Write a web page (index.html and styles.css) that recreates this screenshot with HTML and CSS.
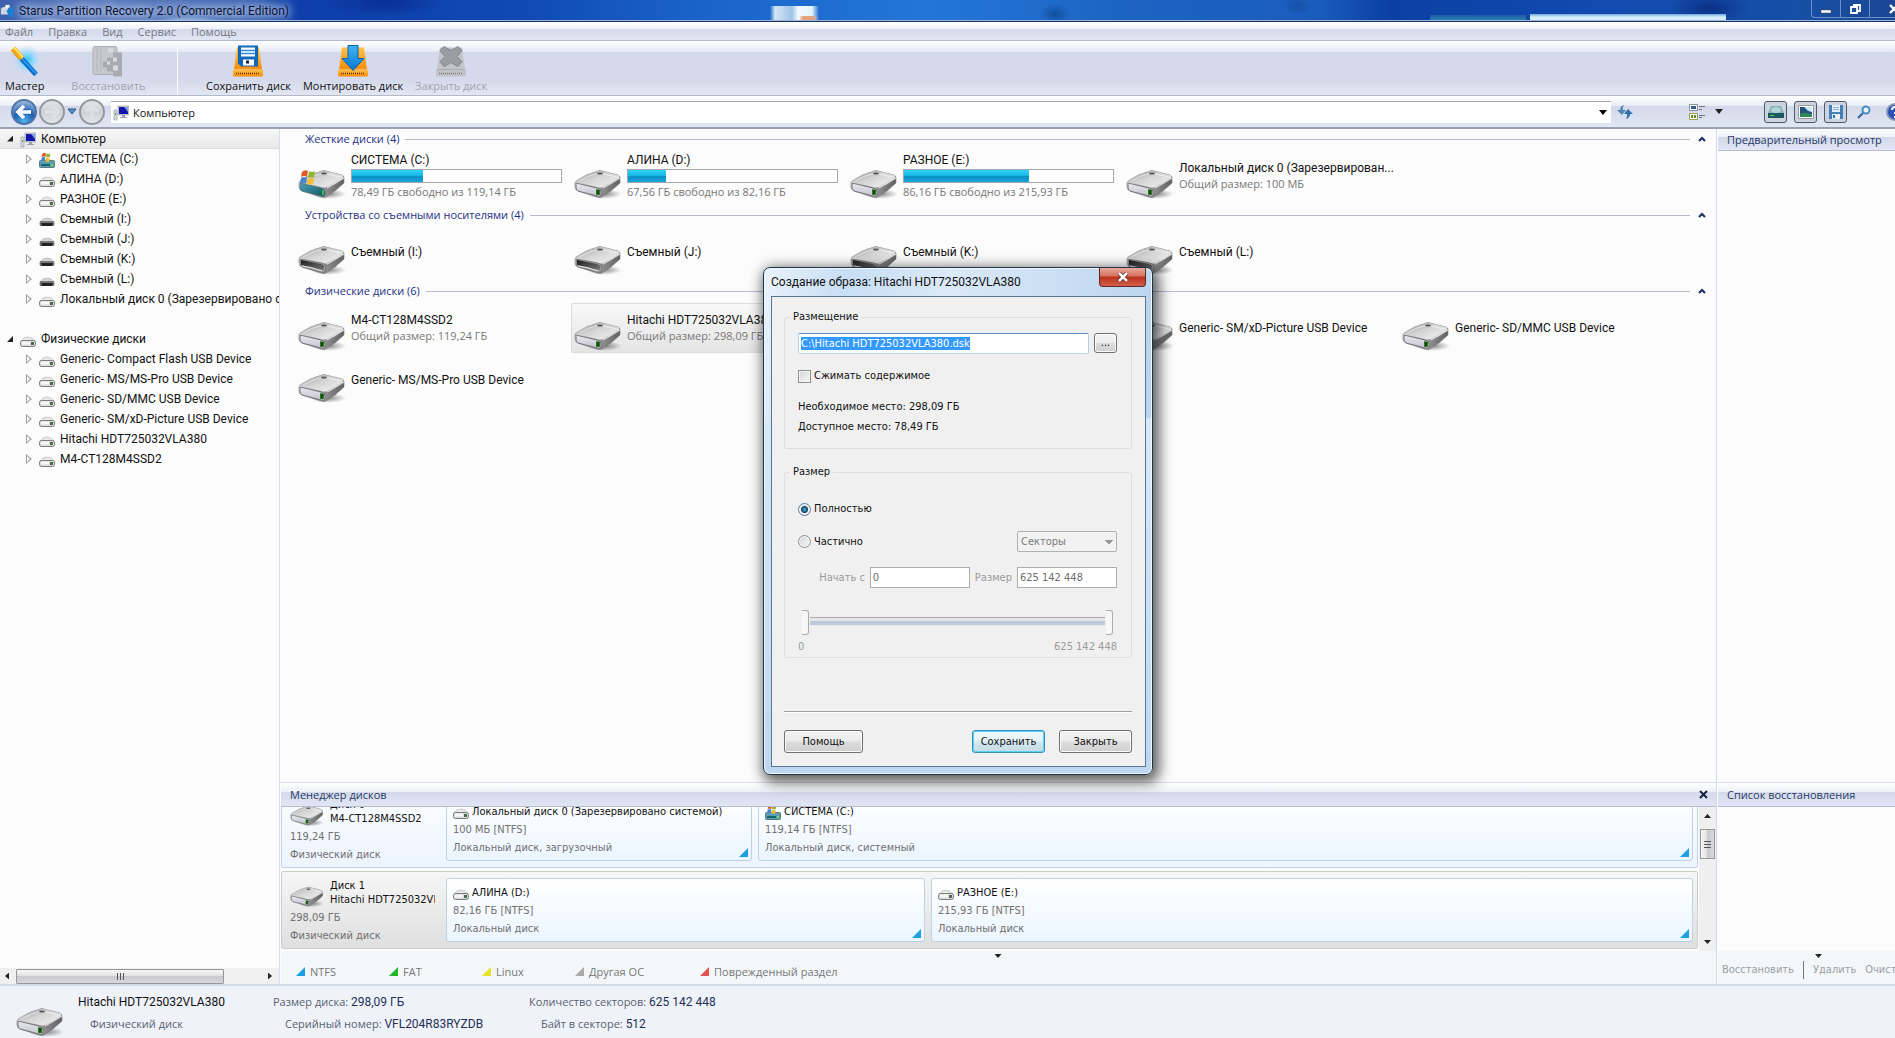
FILE: index.html
```html
<!DOCTYPE html>
<html lang="ru">
<head>
<meta charset="utf-8">
<title>Starus Partition Recovery 2.0 (Commercial Edition)</title>
<link rel="stylesheet" href="styles.css">
</head>
<body>
<svg class="defs" aria-hidden="true">
  <defs>
    <linearGradient id="gTop" x1="0" y1="0" x2="1" y2="1"><stop offset="0" stop-color="#8f8f8f"/><stop offset=".45" stop-color="#d4d4d4"/><stop offset="1" stop-color="#f4f4f4"/></linearGradient>
    <linearGradient id="gFront" x1="0" y1="0" x2="0" y2="1"><stop offset="0" stop-color="#e9e9f1"/><stop offset="1" stop-color="#c3c3cf"/></linearGradient>
    <linearGradient id="gSide" x1="0" y1="0" x2="1" y2="0"><stop offset="0" stop-color="#ececec"/><stop offset=".4" stop-color="#a5a5a5"/><stop offset="1" stop-color="#606060"/></linearGradient>
    <linearGradient id="gHole" x1="0" y1="0" x2="1" y2="1"><stop offset="0" stop-color="#1c1c1c"/><stop offset="1" stop-color="#777"/></linearGradient>
    <linearGradient id="gTeal" x1="0" y1="0" x2="1" y2="1"><stop offset="0" stop-color="#4f9fb8"/><stop offset="1" stop-color="#0c5961"/></linearGradient>
    <linearGradient id="gOrange" x1="0" y1="0" x2="0" y2="1"><stop offset="0" stop-color="#ffc14a"/><stop offset="1" stop-color="#fb8d0c"/></linearGradient>
    <linearGradient id="gBlue" x1="0" y1="0" x2="0" y2="1"><stop offset="0" stop-color="#3cb4f7"/><stop offset="1" stop-color="#0b76cf"/></linearGradient>
    <radialGradient id="gBack" cx=".5" cy=".9" r=".9"><stop offset="0" stop-color="#4fb4ee"/><stop offset=".5" stop-color="#205faf"/><stop offset="1" stop-color="#a9c4e4"/></radialGradient>
    <linearGradient id="gGrey" x1="0" y1="0" x2="0" y2="1"><stop offset="0" stop-color="#e6e7eb"/><stop offset=".5" stop-color="#cfd1d8"/><stop offset="1" stop-color="#e4e6ec"/></linearGradient>
    <radialGradient id="gGlow"><stop offset="0" stop-color="#35c2ff"/><stop offset=".5" stop-color="#8fdcff" stop-opacity=".8"/><stop offset="1" stop-color="#d5dcf0" stop-opacity="0"/></radialGradient>
    <radialGradient id="gShade"><stop offset="0" stop-color="#000" stop-opacity=".45"/><stop offset="1" stop-color="#000" stop-opacity="0"/></radialGradient>

    <symbol id="body" viewBox="0 0 48 31">
      <ellipse cx="30" cy="25" rx="18" ry="5" fill="url(#gShade)"/>
      <path d="M2 12 Q12 5 24 2 Q26 1 28 2 L44 6 Q46 7 46 9 L46 14 Q38 22 28 28 Q26 29 23 28 L4 22 Q1 21 1 18 L1 14Z" fill="url(#gSide)" stroke="#777" stroke-width=".6"/>
      <path d="M2 12 Q12 5 24 2 Q26 1 28 2 L44 6 Q46 7 45 9 Q37 14 29 18 Q26 19 23 18 L3 13Z" fill="url(#gTop)"/>
      <path d="M5 12 Q15 6 26 4 L42 8" fill="none" stroke="#fff" stroke-width=".8" opacity=".7"/>
      <ellipse cx="26" cy="4.500" rx="3" ry="1" fill="#555"/>
      <path d="M29 19 Q38 14 46 9" stroke="#fff" stroke-width="1.300" fill="none" opacity=".75"/>
    </symbol>
    <symbol id="drive" viewBox="0 0 48 31">
      <use href="#body"/>
      <path d="M2 14 L23 19 Q27 20 27 23 L27 26 Q26 28 23 27 L4 22 Q2 21 2 18Z" fill="url(#gFront)" stroke="#6c6c6c" stroke-width=".9"/>
      <path d="M22 20 L26 21 L26 26 L22 26Z" fill="#2d7d22"/><path d="M24 21v4" stroke="#0b220a" stroke-width="1.200"/>
    </symbol>
    <symbol id="removable" viewBox="0 0 48 31">
      <use href="#body"/>
      <path d="M2 14 L24 18 Q28 19 28 22 L27 27 Q26 28 23 27 L4 22 Q2 21 2 18Z" fill="#9a9a9a" stroke="#6c6c6c" stroke-width=".7"/>
      <path d="M3 15 L23 19 Q27 20 26 23 L25 25 Q17 24 12 22 L3 20Z" fill="url(#gHole)"/>
      <path d="M4 21 Q14 22 24 26" stroke="#e4e4e4" stroke-width="1.200" fill="none"/>
    </symbol>
    <symbol id="flag" viewBox="0 0 16 16">
      <path d="M2 3 Q5 0 8 2 L7 8 Q4 6 1 8Z" fill="#e0592a"/><path d="M9 2 Q12 4 15 2 L14 8 Q11 9 8 8Z" fill="#8cb72e"/>
      <path d="M1 9 Q4 7 7 9 L6 15 Q3 13 0 15Z" fill="#4a86d0"/><path d="M8 9 Q11 10 14 9 L13 15 Q10 16 7 15Z" fill="#f6bd2c"/>
    </symbol>
    <symbol id="system" viewBox="0 0 48 31">
      <use href="#body"/>
      <path d="M2 14 L23 19 Q27 20 27 23 L27 26 Q26 28 23 27 L4 22 Q2 21 2 18Z" fill="url(#gTeal)" stroke="#4e6c70" stroke-width=".8"/>
      <path d="M25 21v5" stroke="#53d33a" stroke-width="1.500"/>
      <use href="#flag" x="2" y="0" width="16" height="16"/>
    </symbol>
    <symbol id="sDrive" viewBox="0 0 16 16">
      <path d="M4 6 Q8 4 12 6 L15 9 H1Z" fill="#e8e8e8" stroke="#b4b4b4" stroke-width=".6"/>
      <rect x=".5" y="8.500" width="15" height="6" rx="2" fill="#dcdcdc" stroke="#7d7d7d"/><rect x="2" y="9.500" width="8" height="3" fill="#f6f6f6"/><rect x="11" y="10" width="3" height="3" fill="#4b6b4b"/>
    </symbol>
    <symbol id="sRemovable" viewBox="0 0 16 16">
      <path d="M4 7 Q8 5 12 7 L15 10 H1Z" fill="#d6d6d6" stroke="#aaa" stroke-width=".6"/>
      <path d="M1 9 H15 Q16 12 15 14 H1 Q0 12 1 9Z" fill="#777"/><path d="M2 11 H14 L13 14 H3Z" fill="#222"/>
    </symbol>
    <symbol id="sSystem" viewBox="0 0 16 16">
      <rect x=".5" y="8.500" width="15" height="7" rx="1" fill="#5c9db0" stroke="#5a7d80"/><rect x="2" y="12" width="9" height="2" fill="#17656e"/><rect x="12" y="12" width="2" height="2" fill="#6be04a"/>
      <use href="#flag" x="2" y="0" width="10" height="10"/>
    </symbol>
    <symbol id="pc" viewBox="0 0 16 16">
      <rect x="5" y="1" width="11" height="9" fill="#c9cfd8" stroke="#8d96a3" stroke-width=".6"/><rect x="6" y="2" width="9" height="7" fill="#1414a8"/><path d="M11 2h4v5z" fill="#7aa0ee"/>
      <path d="M9 10h3v2h2v1H7v-1h2z" fill="#9aa2ad"/><rect x="1" y="5" width="3" height="10" fill="#d5d8dd" stroke="#8d96a3" stroke-width=".6"/><rect x="2" y="8" width="1" height="2" fill="#4aa92f"/>
    </symbol>
    <symbol id="hdd" viewBox="0 0 32 32">
      <path d="M5 2 H27 L30 24 H2Z"/><rect x="1" y="24" width="30" height="7" rx="1"/>
    </symbol>
  </defs>
</svg>

<div class="window">
  <header class="titlebar">
    <svg class="app-icon" viewBox="0 0 16 16" aria-hidden="true"><path d="M1 5q4-3 8 0v7H1z" fill="#cfd7df"/><path d="M6 1h5v4H6z" fill="#e9eef3"/><path d="M7 7h3V4h5v3l-1 8h-4l-1-4z" fill="#147fd6"/></svg>
    <h1>Starus Partition Recovery 2.0 (Commercial Edition)</h1>
    <div class="win-buttons">
      <button aria-label="Свернуть"><svg width="12" height="10" viewBox="0 0 12 10"><rect x="1" y="6" width="10" height="3" fill="#fff" stroke="#445" stroke-width=".5"/></svg></button>
      <button aria-label="Восстановить окно"><svg width="12" height="10" viewBox="0 0 12 10"><path d="M4 1h7v6H9M2 3h6v6H2z" fill="none" stroke="#fff" stroke-width="1.800"/></svg></button>
      <button aria-label="Закрыть окно" class="wide"><svg width="12" height="10" viewBox="0 0 12 10"><path d="M2 1l8 8M10 1l-8 8" stroke="#fff" stroke-width="2.400"/></svg></button>
    </div>
  </header>

  <nav class="menubar"><a href="#">Файл</a><a href="#">Правка</a><a href="#">Вид</a><a href="#">Сервис</a><a href="#">Помощь</a></nav>

  <div class="toolbar">
    <div class="tool-group first">
      <button>
        <svg viewBox="0 0 32 32"><circle cx="18" cy="14" r="15" fill="url(#gGlow)"/><path d="M6 6l21 23" stroke="#0a6fd0" stroke-width="5"/><path d="M8 8l19 20" stroke="#2fa5f5" stroke-width="1.500"/><path d="M4 3l9 10" stroke="#f6a80e" stroke-width="6"/><path d="M5 2l9 10" stroke="#ffe36c" stroke-width="2"/></svg>
        Мастер</button>
      <button disabled>
        <svg viewBox="0 0 32 32"><rect x="1" y="1" width="24" height="28" rx="2" fill="#c6c8cd" stroke="#adafb5"/><path d="M5 3v23M9 3v23" stroke="#b3b5ba"/><path d="M15 12h6V7h9v24h-9v-5h-6v-4h-4v-6h4z" fill="#a9abb1"/><path d="M21 12h4v4h-4zM15 16h3v3h-3zM21 20h5v5h-5zM16 3h5v4h-5z" fill="#d9dbe0"/></svg>
        Восстановить</button>
    </div>
    <div class="tool-group">
      <button>
        <svg viewBox="0 0 32 32"><use href="#hdd" fill="url(#gOrange)"/><path d="M4 28h24" stroke="#5b3206" stroke-width="1.500" stroke-dasharray="1 1"/><path d="M6 0h20v21H9l-3-3z" fill="#1267ba"/><path d="M9 2h14v9H9z" fill="#fff"/><path d="M9 5h14M9 8h14" stroke="#2e8ae0" stroke-width="1.500"/><path d="M11 14h11v6H11z" fill="#fff"/><path d="M14 15h3v3h-3z" fill="#123"/></svg>
        Сохранить диск</button>
      <button>
        <svg viewBox="0 0 32 32"><use href="#hdd" fill="url(#gOrange)"/><path d="M4 28h24" stroke="#5b3206" stroke-width="1.500" stroke-dasharray="1 1"/><path d="M11 0h10v13h6L16 25 5 13h6z" fill="url(#gBlue)" stroke="#0861ac"/></svg>
        Монтировать диск</button>
      <button disabled>
        <svg viewBox="0 0 32 32"><use href="#hdd" fill="#c3c4c9"/><path d="M4 28h24" stroke="#777" stroke-width="1.500" stroke-dasharray="1 1"/><path d="M2 24h28" stroke="#adaeb3"/><path d="M9 1l7 4 7-4 4 4-5 6 5 5-4 5-7-4-7 4-4-5 5-5-5-6z" fill="#9c9da3" stroke="#85868c"/></svg>
        Закрыть диск</button>
    </div>
  </div>

  <div class="navbar">
    <button aria-label="Назад" class="round"><svg viewBox="0 0 28 28"><circle cx="14" cy="14" r="12" fill="url(#gBack)" stroke="#4f74a5" stroke-width="2"/><path d="M21 14H9M14 8l-6 6 6 6" fill="none" stroke="#fff" stroke-width="3.500"/></svg></button>
    <button aria-label="Вперед" class="round"><svg viewBox="0 0 28 28"><circle cx="14" cy="14" r="12" fill="url(#gGrey)" stroke="#96989f" stroke-width="2"/><path d="M7 14h12M14 8l6 6-6 6" fill="none" stroke="#dfe0e5" stroke-width="3"/></svg></button>
    <button aria-label="История" class="history"><svg viewBox="0 0 10 8"><path d="M1 1h8L5 6z" fill="#5798d0" stroke="#23568f"/></svg></button>
    <button aria-label="Вверх" class="round"><svg viewBox="0 0 28 28"><circle cx="14" cy="14" r="12" fill="url(#gGrey)" stroke="#96989f" stroke-width="2"/><path d="M14 21V9M8 14l6-6 6 6" fill="none" stroke="#dfe0e5" stroke-width="3"/></svg></button>
    <label class="address">
      <svg width="16" height="16"><use href="#pc"/></svg>
      <input type="text" value="Компьютер" aria-label="Адрес">
      <svg width="8" height="5" viewBox="0 0 8 5"><path d="M0 0h8L4 5z"/></svg>
    </label>
    <button aria-label="Обновить" class="plain"><svg width="16" height="14" viewBox="0 0 16 14"><path d="M7 0Q3 1 3 5H0l5 5 4-5H6Q5 3 7 0" fill="#4d86b5"/><path d="M9 14q4-1 4-5h3l-5-5-4 5h3q1 2-1 5" fill="#2f6fae"/></svg></button>
    <div class="nav-right">
      <button aria-label="Вид" class="plain view"><svg width="17" height="16" viewBox="0 0 17 16"><rect x=".5" y=".5" width="8" height="6" fill="#fff" stroke="#8795a3"/><rect x="2" y="2" width="5" height="3" fill="#345f88"/><rect x=".5" y="9.500" width="8" height="6" fill="#fff" stroke="#9aa34d"/><path d="M2 11h2v3H2zM5 11h2v3H5z" fill="#66892c"/><path d="M10 2.500h6M10 5.500h3M10 11.500h6M10 13.500h3" stroke="#68717c"/></svg><svg width="8" height="5" viewBox="0 0 8 5"><path d="M0 0h8L4 5z" fill="#222"/></svg></button>
      <button aria-label="Диски" class="toggle"><svg width="16" height="16"><path d="M3 2h10l3 7H0z" fill="#83b4b8"/><ellipse cx="8" cy="6" rx="5" ry="3" fill="#b2d4d7"/><path d="M0 9h16v5H0z" fill="#1d5961"/><path d="M2 11h4v1H2z" fill="#59d14b"/></svg></button>
      <button aria-label="Просмотр" class="toggle"><svg width="16" height="16"><path d="M.5 1.500h15v13H.5z" fill="#fff" stroke="#999"/><path d="M2 3h12v10H2z" fill="#4aa3d6"/><path d="M7 3h7v5q-5-1-7-5z" fill="#cfeaf8"/><path d="M2 3h4q3 5 8 5v2H2z" fill="#23507c"/><path d="M2 10q6-3 12 1v2H2z" fill="#2d8a58"/></svg></button>
      <button aria-label="Список" class="toggle"><svg width="16" height="16"><path d="M1 1h14v14H1z" fill="#4380b8"/><path d="M4 1h8v7H4z" fill="#e4eff8"/><path d="M5 3.500h6M5 5.500h6" stroke="#8fb4d4"/><path d="M4 10h8v5H4z" fill="#e7eef5"/><path d="M5 11h2v3H5z" fill="#326fa8"/></svg></button>
      <button aria-label="Поиск" class="plain"><svg width="14" height="14" viewBox="0 0 14 14"><circle cx="9" cy="5" r="3.500" fill="#e8f3fc" stroke="#4b8bc0" stroke-width="2"/><path d="M6 8l-5 5" stroke="#31689b" stroke-width="2"/></svg></button>
      <button aria-label="Справка" class="plain help"><svg width="18" height="18" viewBox="0 0 18 18"><circle cx="9" cy="9" r="8" fill="#2b51b0" stroke="#8497bb" stroke-width="2"/><path d="M6 7q0-3 3-3t3 3q0 2-3 3v1M9 13v2" fill="none" stroke="#fff" stroke-width="2"/></svg></button>
    </div>
  </div>

  <div class="workspace">
    <aside class="sidebar">
      <ul class="tree">
        <li>
          <div class="node root selected"><i class="open"></i><svg><use href="#pc"/></svg>Компьютер</div>
          <ul>
            <li class="node"><i class="shut"></i><svg><use href="#sSystem"/></svg>СИСТЕМА (C:)</li>
            <li class="node"><i class="shut"></i><svg><use href="#sDrive"/></svg>АЛИНА (D:)</li>
            <li class="node"><i class="shut"></i><svg><use href="#sDrive"/></svg>РАЗНОЕ (E:)</li>
            <li class="node"><i class="shut"></i><svg><use href="#sRemovable"/></svg>Съемный (I:)</li>
            <li class="node"><i class="shut"></i><svg><use href="#sRemovable"/></svg>Съемный (J:)</li>
            <li class="node"><i class="shut"></i><svg><use href="#sRemovable"/></svg>Съемный (K:)</li>
            <li class="node"><i class="shut"></i><svg><use href="#sRemovable"/></svg>Съемный (L:)</li>
            <li class="node"><i class="shut"></i><svg><use href="#sDrive"/></svg>Локальный диск 0 (Зарезервировано системой)</li>
          </ul>
        </li>
        <li>
          <div class="node root"><i class="open"></i><svg><use href="#sDrive"/></svg>Физические диски</div>
          <ul>
            <li class="node"><i class="shut"></i><svg><use href="#sDrive"/></svg>Generic- Compact Flash USB Device</li>
            <li class="node"><i class="shut"></i><svg><use href="#sDrive"/></svg>Generic- MS/MS-Pro USB Device</li>
            <li class="node"><i class="shut"></i><svg><use href="#sDrive"/></svg>Generic- SD/MMC USB Device</li>
            <li class="node"><i class="shut"></i><svg><use href="#sDrive"/></svg>Generic- SM/xD-Picture USB Device</li>
            <li class="node"><i class="shut"></i><svg><use href="#sDrive"/></svg>Hitachi HDT725032VLA380</li>
            <li class="node"><i class="shut"></i><svg><use href="#sDrive"/></svg>M4-CT128M4SSD2</li>
          </ul>
        </li>
      </ul>
      <div class="hscroll"><i class="left"></i><div class="hthumb"><b></b><b></b><b></b></div><i class="right-end"></i></div>
    </aside>

    <main class="center">
      <div class="browser">
        <section>
          <h2><span>Жесткие диски (4)</span><svg viewBox="0 0 8 6"><path d="M1 5l3-3 3 3"/></svg></h2>
          <div class="items">
            <div class="item"><svg><use href="#system"/></svg><div><b>СИСТЕМА (C:)</b><div class="bar"><span style="width:34%"></span></div><small>78,49 ГБ свободно из 119,14 ГБ</small></div></div>
            <div class="item"><svg><use href="#drive"/></svg><div><b>АЛИНА (D:)</b><div class="bar"><span style="width:18%"></span></div><small>67,56 ГБ свободно из 82,16 ГБ</small></div></div>
            <div class="item"><svg><use href="#drive"/></svg><div><b>РАЗНОЕ (E:)</b><div class="bar"><span style="width:60%"></span></div><small>86,16 ГБ свободно из 215,93 ГБ</small></div></div>
            <div class="item"><svg><use href="#drive"/></svg><div><b>Локальный диск 0 (Зарезервирован...</b><small>Общий размер: 100 МБ</small></div></div>
          </div>
        </section>
        <section>
          <h2><span>Устройства со съемными носителями (4)</span><svg viewBox="0 0 8 6"><path d="M1 5l3-3 3 3"/></svg></h2>
          <div class="items">
            <div class="item"><svg><use href="#removable"/></svg><div><b>Съемный (I:)</b></div></div>
            <div class="item"><svg><use href="#removable"/></svg><div><b>Съемный (J:)</b></div></div>
            <div class="item"><svg><use href="#removable"/></svg><div><b>Съемный (K:)</b></div></div>
            <div class="item"><svg><use href="#removable"/></svg><div><b>Съемный (L:)</b></div></div>
          </div>
        </section>
        <section>
          <h2><span>Физические диски (6)</span><svg viewBox="0 0 8 6"><path d="M1 5l3-3 3 3"/></svg></h2>
          <div class="items">
            <div class="item"><svg><use href="#drive"/></svg><div><b>M4-CT128M4SSD2</b><small>Общий размер: 119,24 ГБ</small></div></div>
            <div class="item active"><svg><use href="#drive"/></svg><div><b>Hitachi HDT725032VLA380</b><small>Общий размер: 298,09 ГБ</small></div></div>
            <div class="item"><svg><use href="#drive"/></svg><div><b>Generic- Compact Flash USB Device</b></div></div>
            <div class="item"><svg><use href="#drive"/></svg><div><b>Generic- SM/xD-Picture USB Device</b></div></div>
            <div class="item"><svg><use href="#drive"/></svg><div><b>Generic- SD/MMC USB Device</b></div></div>
            <div class="item"><svg><use href="#drive"/></svg><div><b>Generic- MS/MS-Pro USB Device</b></div></div>
          </div>
        </section>
      </div>

      <section class="manager">
        <h2 class="panel-title">Менеджер дисков<button aria-label="Закрыть панель"><svg width="9" height="9" viewBox="0 0 9 9"><path d="M1 1l7 7M8 1L1 8"/></svg></button></h2>
        <div class="manager-body">
          <div class="disks">
            <div class="disk">
              <div class="disk-info"><svg><use href="#drive"/></svg><div class="disk-name">Диск 0<br>M4-CT128M4SSD2</div><p>119,24 ГБ</p><p>Физический диск</p></div>
              <div class="part p0"><h3><svg><use href="#sDrive"/></svg>Локальный диск 0 (Зарезервировано системой)</h3><p>100 МБ [NTFS]</p><p>Локальный диск, загрузочный</p><i class="mark"></i></div>
              <div class="part"><h3><svg><use href="#sSystem"/></svg>СИСТЕМА (C:)</h3><p>119,14 ГБ [NTFS]</p><p>Локальный диск, системный</p><i class="mark"></i></div>
            </div>
            <div class="disk current">
              <div class="disk-info"><svg><use href="#drive"/></svg><div class="disk-name">Диск 1<br>Hitachi HDT725032VLA380</div><p>298,09 ГБ</p><p>Физический диск</p></div>
              <div class="part p1"><h3><svg><use href="#sDrive"/></svg>АЛИНА (D:)</h3><p>82,16 ГБ [NTFS]</p><p>Локальный диск</p><i class="mark"></i></div>
              <div class="part"><h3><svg><use href="#sDrive"/></svg>РАЗНОЕ (E:)</h3><p>215,93 ГБ [NTFS]</p><p>Локальный диск</p><i class="mark"></i></div>
            </div>
          </div>
          <div class="vscroll"><i class="up"></i><div class="vthumb"><b></b><b></b><b></b></div><i class="down"></i></div>
        </div>
        <div class="legend">
          <span><i class="mark"></i>NTFS</span><span><i class="mark fat"></i>FAT</span><span><i class="mark linux"></i>Linux</span><span><i class="mark other"></i>Другая ОС</span><span><i class="mark bad"></i>Поврежденный раздел</span>
          <i class="more"></i>
        </div>
      </section>
    </main>

    <aside class="right">
      <section class="preview"><h2 class="panel-title">Предварительный просмотр</h2></section>
      <section class="recovery">
        <h2 class="panel-title">Список восстановления</h2>
        <div class="recovery-body"></div>
        <div class="recovery-actions"><button disabled>Восстановить</button><hr><button disabled>Удалить</button><button disabled>Очистить</button><i class="more"></i></div>
      </section>
    </aside>
  </div>

  <footer class="status">
    <svg><use href="#drive"/></svg>
    <div class="st-name"><b>Hitachi HDT725032VLA380</b><span>Физический диск</span></div>
    <div class="st-size"><span>Размер диска: <b>298,09 ГБ</b></span><span>Серийный номер: <b>VFL204R83RYZDB</b></span></div>
    <div class="st-sectors"><span>Количество секторов: <b>625 142 448</b></span><span>Байт в секторе: <b>512</b></span></div>
  </footer>

  <div class="dialog" role="dialog" aria-labelledby="dlg">
    <div class="dlg-title"><h2 id="dlg">Создание образа: Hitachi HDT725032VLA380</h2><button aria-label="Закрыть диалог"><svg width="12" height="10" viewBox="0 0 12 10"><path d="M2 1l8 8M10 1l-8 8" stroke="#5a2020" stroke-width="4"/><path d="M2 1l8 8M10 1l-8 8" stroke="#fff" stroke-width="2.500"/></svg></button></div>
    <form class="dlg-body">
      <fieldset class="place">
        <legend>Размещение</legend>
        <div class="path"><input id="path" type="text" value="C:\Hitachi HDT725032VLA380.dsk" aria-label="Путь"><button type="button">...</button></div>
        <label class="check"><input type="checkbox">Сжимать содержимое</label>
        <p>Необходимое место: 298,09 ГБ</p>
        <p>Доступное место: 78,49 ГБ</p>
      </fieldset>
      <fieldset class="size">
        <legend>Размер</legend>
        <label class="check"><input type="radio" name="mode" checked>Полностью</label>
        <div class="partial"><label class="check"><input type="radio" name="mode">Частично</label><select disabled aria-label="Единицы"><option>Секторы</option></select></div>
        <div class="bounds"><label for="from">Начать с</label><input id="from" type="text" value="0" disabled><label for="len">Размер</label><input id="len" type="text" value="625 142 448" disabled></div>
        <div class="slider"><input type="range" min="0" max="100" value="0" disabled aria-label="Начало"><input class="end" type="range" min="0" max="100" value="100" disabled aria-label="Конец"></div>
        <div class="scale"><span>0</span><span>625 142 448</span></div>
      </fieldset>
      <hr>
      <div class="dlg-buttons"><button type="button" class="help-btn">Помощь</button><button type="button" class="default">Сохранить</button><button type="button">Закрыть</button></div>
    </form>
  </div>
</div>
<script src="app.js"></script>
</body>
</html>
```
FILE: styles.css
```css
* { box-sizing: border-box; }
html, body { margin: 0; }
body {
  --ui: Roboto, "Open Sans", sans-serif;
  --ui-small: "Open Sans", Roboto, sans-serif;
  --classic: "DejaVu Sans Condensed", "DejaVu Sans", sans-serif;
  --band: linear-gradient(#fff, #eef0f8 38%, #d4daeb 40%, #e1e6f5);
  font: 12px/16px var(--ui);
  color: #111;
  background: #fcfcfc;
}
h1, h2, h3, p, ul { margin: 0; padding: 0; font-weight: normal; list-style: none; }
h1, h2, h3 { font-size: 12px; line-height: 16px; }
b { font-weight: normal; }
button { font: inherit; color: inherit; border: 0; background: none; padding: 0; margin: 0; }
button svg { display: block; }
svg { flex: none; }
.defs { position: absolute; width: 0; height: 0; }

.window { position: relative; display: flex; flex-direction: column; min-height: 100vh; overflow: hidden; }

/* title bar */
.titlebar {
  display: flex; align-items: center; height: 22px; overflow: hidden;
  border-bottom: 1px solid #173260; box-shadow: inset 0 -1px #9fb6dc;
  background:
    linear-gradient(90deg, transparent, #e3a17c 4px, #e3a17c 14px, transparent) 799px 16px / 19px 5px no-repeat,
    linear-gradient(90deg, transparent, #d3e6f5 5px, #9fc4e6 22px, #f2fbff 28px, #e2f4fd 42px, transparent) 770px 6px / 49px 15px no-repeat,
    radial-gradient(ellipse 40px 8px at 188px 24px, #c5ecff, transparent),
    radial-gradient(ellipse 26px 7px at 50px 24px, #dce8fa, transparent),
    linear-gradient(#6fa6da, #d5eefb 3px) 1530px 14px / 196px 7px no-repeat,
    linear-gradient(#1d5ca5, #2b86b4) 1430px 15px / 96px 6px no-repeat,
    radial-gradient(ellipse 60px 16px at 384px 2px, #0a2f94, transparent),
    radial-gradient(ellipse 40px 16px at 1710px 8px, #0b3086, transparent),
    radial-gradient(ellipse 16px 10px at 1055px 14px, #12509f, transparent),
    radial-gradient(ellipse 14px 10px at 1298px 6px, #1550a8, transparent),
    linear-gradient(90deg, #3c5fae, #5a78bd 90px, #4166b4 240px, #0d3eaa 300px, #1049b2 520px, #1a63cb 700px, #2376d6 930px, #1c63c2 1130px, #1a5cbe 1320px, #0b3fa3 1390px, #124ab0 1600px, #164fa6 1800px, #1b4793);
}
.app-icon { width: 14px; height: 16px; margin-right: 5px; }
.titlebar h1 { color: #0b1330; padding: 0 8px 0 0; text-shadow: 0 0 6px #cfdcf3, 0 0 10px #cfdcf3, 0 0 14px #cfdcf3; white-space: nowrap; }
.win-buttons { display: flex; margin-left: auto; margin-right: -24px; align-self: flex-start; border: 1px solid #6d8fc9; border-top: 0; border-radius: 0 0 4px 4px; }
.win-buttons button { display: flex; align-items: center; justify-content: center; width: 29px; height: 17px; border-right: 1px solid #6d8fc9; }
.win-buttons .wide { width: 48px; border: 0; }

.menubar { display: flex; align-items: center; gap: 15px; height: 19px; padding: 1px 5px 0; background: var(--band); border-bottom: 1px solid #b3bacb; font: 11px/16px var(--ui-small); }
.menubar a { color: #74787f; text-decoration: none; }

.toolbar { display: flex; height: 55px; background: linear-gradient(#fff, #e9ecf6 19%, #d4d9eb 21%, #d4d9eb 70%, #e2e6f3); border-bottom: 1px solid #b3b9c6; font: 11px/16px var(--ui-small); }
.tool-group { display: flex; gap: 12px; padding: 4px 0 0 28px; }
.tool-group.first { width: 178px; gap: 27px; padding-left: 5px; border-right: 1px solid #fbfcff; }
.toolbar button { display: flex; flex-direction: column; align-items: center; white-space: nowrap; }
.toolbar svg { width: 32px; height: 33px; }
.toolbar button:disabled { color: #a0a3ac; }

.navbar { display: flex; align-items: center; height: 33px; padding-left: 10px; background: linear-gradient(#fff, #eceff7 30%, #d3d9ea 33%, #e1e6f4); border-bottom: 2px solid #9aa2b1; }
.round, .round svg { width: 28px; height: 28px; }
.history { width: 12px; padding: 0 1px; }
.history svg { width: 10px; height: 8px; }
.address { display: flex; flex: 1; align-items: center; gap: 4px; height: 22px; margin: 1px 6px 0 5px; padding: 0 4px 0 2px; background: #fff; border-top: 1px solid #a6a9b0; }
.address input { flex: 1; border: 0; outline: 0; padding: 0; background: none; font: 11px/16px var(--ui-small); color: #111; }
.nav-right { display: flex; align-items: center; width: 262px; padding-left: 56px; overflow: hidden; }
.view { display: flex; align-items: center; gap: 9px; margin-right: 41px; }
.toggle { display: flex; flex: none; align-items: center; justify-content: center; width: 23px; height: 22px; margin-right: 7px; border: 1px solid #50596a; border-radius: 3px; background: #cbd2e0; }
.help { margin-left: 15px; }
.nav-right .plain { flex: none; }
.nav-right .toggle + .plain { margin-left: 3px; }

/* workspace */
.workspace { display: flex; flex: 1; align-items: stretch; }
.sidebar { display: flex; flex-direction: column; width: 280px; flex: none; border-right: 1px solid #d7dee9; }
.tree { flex: 1; overflow: hidden; }
.tree > li + li { margin-top: 20px; }
.node { display: flex; align-items: center; height: 20px; padding-left: 26px; white-space: nowrap; overflow: hidden; }
.node svg { width: 16px; height: 16px; margin: 2px 5px 0 7px; }
.node.root { padding-left: 7px; }
.node.selected { background: linear-gradient(#f8f8f8, #e8e8e8); border-bottom: 1px solid #dcdcdc; }
.shut { width: 6px; height: 10px; clip-path: polygon(0 0, 100% 50%, 0 100%); background: #a2a2a2; position: relative; flex: none; }
.shut::after { content: ""; position: absolute; inset: 2px 2px 2px 1px; background: #fff; clip-path: polygon(0 0, 100% 50%, 0 100%); }
.open { width: 6px; height: 6px; clip-path: polygon(100% 0, 100% 100%, 0 100%); background: #222; flex: none; }
.hscroll { display: flex; align-items: center; height: 16px; padding: 0 7px 0 5px; background: #f0f0f0; }
.hthumb { display: flex; justify-content: center; align-items: center; gap: 2px; width: 208px; height: 15px; margin-left: 7px; border: 1px solid #979797; border-radius: 1px; background: linear-gradient(#f5f5f5, #e3e3e6 45%, #c9c9cf 50%, #d8d8dc); }
.hthumb b { width: 1px; height: 7px; background: #555; }
.left, .right-end { width: 4px; height: 7px; flex: none; background: #222; clip-path: polygon(100% 0, 100% 100%, 0 50%); }
.right-end { margin-left: auto; clip-path: polygon(0 0, 0 100%, 100% 50%); }

.center { display: flex; flex-direction: column; flex: 1; min-width: 0; border-right: 1px solid #d2dae5; }
.browser { flex: 1; padding-left: 15px; }
.browser section { margin-bottom: 4px; }
.browser h2 { display: flex; align-items: center; height: 20px; padding: 0 10px; color: #1e3287; font: 11px/16px var(--ui-small); }
.browser h2 span { display: flex; flex: 1; align-items: center; }
.browser h2 span::after { content: ""; flex: 1; height: 1px; margin: 0 8px 0 6px; background: #b6bdd2; }
.browser h2 svg { width: 8px; height: 6px; fill: none; stroke: #182d60; stroke-width: 2; }
.items { display: grid; grid-template-columns: repeat(auto-fill, 276px); row-gap: 2px; padding-top: 2px; }
.item { display: flex; align-items: center; height: 50px; padding-left: 2px; border: 1px solid transparent; white-space: nowrap; }
.item > svg { width: 48px; height: 31px; margin: 17px 5px 0 0; }
.item > div { display: flex; flex-direction: column; }
.item small { font: 11px/16px var(--ui-small); color: #777; }
.item.active { border-color: #dcdcdc; border-radius: 2px; background: linear-gradient(#f9f9f9, #e4e4e4); }
.bar { width: 211px; height: 14px; margin: 1px 0; border: 1px solid #a3a7ad; background: #fff; }
.bar span { display: block; height: 100%; background: linear-gradient(#30d3f5, #18b9e8 45%, #0690c8 55%, #1aa5d8); }

/* panels */
.panel-title { display: flex; align-items: center; height: 22px; padding: 0 10px 0 9px; background: var(--band); border-bottom: 1px solid #b5bdcd; color: #273a66; font: 11px/16px var(--ui-small); white-space: nowrap; overflow: hidden; }
.panel-title button { margin-left: auto; }
.panel-title path { stroke: #142340; stroke-width: 2; }
.manager { padding-left: 1px; border-top: 1px solid #d5dcea; }
.manager .panel-title { height: 24px; padding: 0 8px 0 9px; }
.manager-body { display: flex; height: 144px; font: 11px/14px var(--classic); }
.disks { display: flex; flex: 1; flex-direction: column; justify-content: flex-end; gap: 3px; min-width: 0; overflow: hidden; padding: 0 1px 2px 0; }
.disk { display: flex; flex: none; gap: 6px; height: 78px; padding: 6px 4px 6px 0; border: 1px solid #c4d3ea; border-radius: 2px; background: linear-gradient(#fcfdff, #ecf4fe); }
.disk.current { border-color: #cdcdcd; background: linear-gradient(#f6f6f6, #dfdfdf); }
.disk-info { display: grid; grid-template-columns: 34px 1fr; grid-template-rows: 31px 18px 18px; column-gap: 6px; width: 158px; flex: none; padding: 0 5px 0 8px; overflow: hidden; align-content: start; }
.disk-info svg { width: 34px; height: 22px; margin-top: 8px; }
.disk-name { overflow: hidden; white-space: nowrap; padding-top: 1px; }
.disk-info p { grid-column: 1 / 3; line-height: 18px; color: #707070; }
.part { position: relative; flex: 1; min-width: 0; padding: 5px 6px 0; border: 1px solid #bcd2e6; border-radius: 3px; background: linear-gradient(#fff, #ebf5ff); white-space: nowrap; overflow: hidden; }
.p0 { flex: 0 0 306px; }
.p1 { flex: 0 0 479px; }
.part h3 { display: flex; align-items: center; gap: 3px; font: 11px/18px var(--classic); }
.part h3 svg { width: 16px; height: 16px; }
.part p { line-height: 18px; color: #707070; }
.mark { display: block; width: 9px; height: 9px; background: #1ba1e2; clip-path: polygon(100% 0, 100% 100%, 0 100%); }
.part .mark { position: absolute; right: 3px; bottom: 3px; }
.fat { background: #1fb826; } .linux { background: #e4e41f; } .other { background: #aaa; } .bad { background: #e25252; }
.vscroll { display: flex; flex-direction: column; align-items: center; width: 17px; padding: 7px 0; background: #efefef; }
.up, .down { width: 7px; height: 4px; background: #222; clip-path: polygon(50% 0, 100% 100%, 0 100%); }
.down { margin-top: auto; clip-path: polygon(0 0, 100% 0, 50% 100%); }
.vthumb { display: flex; flex-direction: column; align-items: center; justify-content: center; gap: 2px; width: 15px; height: 30px; margin-top: 11px; border: 1px solid #979797; background: linear-gradient(90deg, #f5f5f5, #e3e3e6 45%, #c9c9cf 50%, #d8d8dc); }
.vthumb b { width: 7px; height: 1px; background: #555; }
.legend { position: relative; display: flex; align-items: center; height: 33px; padding: 8px 15px 0; background: #f3f7fa; color: #777; font: 11px/16px var(--ui-small); }
.legend span { display: flex; align-items: center; gap: 5px; width: 93px; }
.legend span:last-of-type { width: auto; margin-left: 32px; }
.more { position: absolute; top: 3px; left: 50%; width: 7px; height: 4px; margin-left: -4px; background: #222; clip-path: polygon(0 0, 100% 0, 50% 100%); }

.right { display: flex; flex-direction: column; width: 178px; flex: none; padding-left: 1px; }
.preview { flex: 1; }
.recovery { border-top: 1px solid #d5dcea; }
.recovery .panel-title { height: 24px; }
.recovery-body { height: 144px; }
.recovery-actions { position: relative; display: flex; align-items: center; gap: 9px; height: 33px; padding: 4px 0 0 4px; background: #f3f7fa; color: #9b9ea3; font: 11px/16px var(--classic); overflow: hidden; }
.recovery-actions .more { left: 97px; margin: 0; }
.recovery-actions hr { flex: none; width: 1px; height: 18px; margin: 0; border: 0; background: #777; }

/* status bar */
.status { display: flex; height: 54px; padding: 8px 16px 0; background: #eff3f9; border-top: 2px solid #d3dce8; }
.status svg { width: 48px; height: 31px; margin-top: 13px; }
.status div { display: flex; flex-direction: column; gap: 6px; white-space: nowrap; }
.status span { color: #596070; font: 11px/16px var(--ui-small); }
.status span b { color: #1f2f57; font: 12px/16px var(--ui); }
.status div > :last-child { padding-left: 12px; }
.st-name { width: 195px; margin-left: 14px; }
.st-size { width: 256px; }

/* image dialog */
.dialog { position: absolute; left: 763px; top: 267px; width: 390px; padding: 0 6px 7px 7px; border: 1px solid #1f3448; border-radius: 7px; background: linear-gradient(100deg, #e9f2fb, #c8def4 20%, #dbe9f8 45%, #b9d3ee 100%) 0 0 / 100% 150px no-repeat, linear-gradient(#e3f0fc, #bdd7f2); box-shadow: inset 0 0 0 1px #eef7ff, 3px 4px 14px 3px rgba(0, 0, 0, .65); }
.dlg-title { display: flex; align-items: center; justify-content: space-between; height: 28px; }
.dlg-title h2 { white-space: nowrap; }
.dlg-title button { display: flex; align-items: center; justify-content: center; align-self: flex-start; width: 47px; height: 19px; border: 1px solid #5d2a2a; border-top: 0; border-radius: 0 0 4px 4px; background: linear-gradient(#e9a99b, #d6705e 45%, #b9301d 50%, #d3614c); }
.dlg-body { padding: 12px 13px 13px 12px; border: 1px solid #5b7690; background: #f0f0f0; font: 11px/16px var(--classic); }
.dialog fieldset { margin: 0; padding: 8px 14px 0 13px; border: 1px solid #dcdfe2; border-radius: 3px; min-width: 0; }
.dialog legend { margin-left: -8px; padding: 0 3px; line-height: 16px; height: 16px; }
.place { height: 140px; }
.dialog .size { height: 194px; margin-top: 15px; padding-top: 21px; }
.path { display: flex; gap: 5px; }
.dialog input[type=text] { height: 21px; padding: 0 2px; border: 1px solid #abadb3; font: 11px/14px var(--classic); min-width: 0; }
.dialog .path input { flex: 1; border-color: #5a8fc0 #b5cfe7 #b7d9ed; border-radius: 2px; outline: 0; }
.path input::selection { background: #3399ff; color: #fff; }
.path button { width: 23px; height: 20px; line-height: 14px; }
.path button, .dlg-buttons button { border: 1px solid #707070; border-radius: 3px; background: linear-gradient(#f3f3f3, #ebebeb 48%, #dcdcdc 52%, #cfcfcf); box-shadow: inset 0 0 0 1px #fbfbfb; }
.check { display: flex; align-items: center; gap: 3px; height: 16px; }
.check input { appearance: none; width: 13px; height: 13px; margin: 0; border: 1px solid #8e8f8f; background: linear-gradient(135deg, #d3d7da, #f6f6f6); box-shadow: inset 0 0 0 1px #f4f4f4; }
.check input[type=radio] { border-radius: 50%; }
.check input[type=radio]:checked { border-color: #5f7c9a; background: radial-gradient(circle, #3c92c0 1px, #12415f 3px, #e6eef5 4px); }
.place .check { margin: 14px 0 15px; }
.place p { margin-bottom: 4px; }
.partial { display: flex; justify-content: space-between; align-items: center; margin: 14px 0 15px; height: 21px; }
.partial select { appearance: none; width: 100px; height: 21px; padding: 0 8px 0 3px; border: 1px solid #adb2b5; border-radius: 2px; color: #7b7b7b; font: 11px/16px var(--classic); opacity: 1; background: linear-gradient(45deg, transparent 50%, #999 50%) 87px 8px / 4px 4px no-repeat, linear-gradient(-45deg, transparent 50%, #999 50%) 91px 8px / 4px 4px no-repeat, #f2f2f2; }
.bounds { display: flex; align-items: center; justify-content: flex-end; gap: 5px; color: #9b9b9b; }
.bounds input { width: 100px; background: #fff; color: #6d6d6d; }
.slider { display: grid; margin: 21px 4px 0; height: 30px; background: linear-gradient(#a9abad 1px, #e3e5e7 1px, #e3e5e7 4px, #bccadb 4px, #bccadb 8px, #e7e7e7 8px, #f7f7f7 11px) 8px 8px / calc(100% - 16px) 11px no-repeat; }
.slider input { grid-area: 1 / 1; appearance: none; width: 100%; height: 26px; margin: 0; background: none; }
.slider input::-webkit-slider-thumb { appearance: none; width: 7px; height: 25px; border: 1px solid #acacac; border-left: 0; border-radius: 0 3px 3px 0; background: #f7f7f7; }
.scale { display: flex; justify-content: space-between; color: #9b9b9b; }
.dlg-body > hr { margin: 53px 0 17px; border: 0; border-top: 1px solid #a0a0a0; border-bottom: 1px solid #fff; }
.dlg-buttons { display: flex; gap: 14px; }
.dlg-buttons button { width: 73px; height: 23px; }
.dlg-buttons .help-btn { width: 79px; margin-right: auto; }
.dlg-buttons .default { border-color: #3a8fb7; background: linear-gradient(#f0f8fb, #e3f3f8 48%, #d2e6ee 52%, #c5dde6); box-shadow: inset 0 0 0 1px #56d2f5; }
```
FILE: app.js
```js
// Open the dialog with the suggested path selected, ready to be overwritten.
const path = document.getElementById('path');
path.focus();
path.select();
```
